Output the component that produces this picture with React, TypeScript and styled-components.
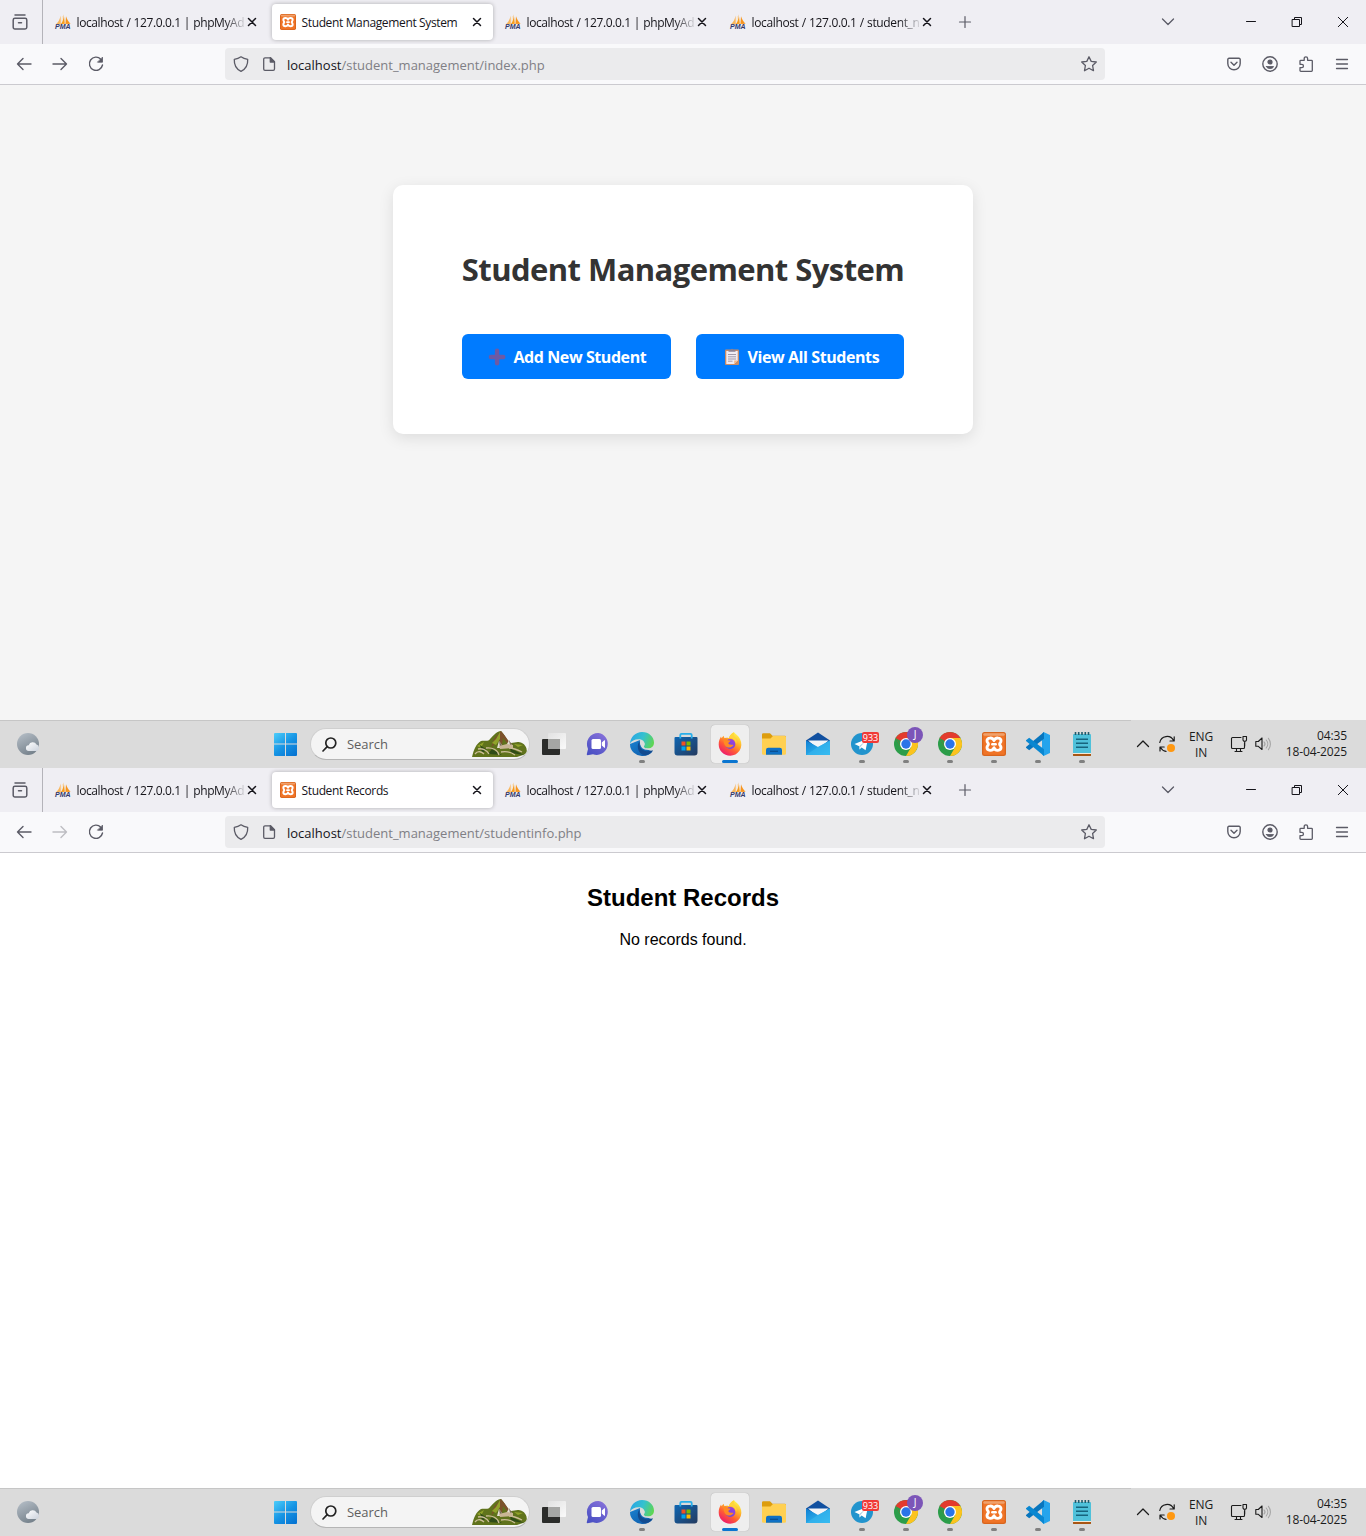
import React from "react";
import styled, { createGlobalStyle, css } from "styled-components";

const ui = `"Open Sans", "Noto Sans", sans-serif`;

const GlobalStyle = createGlobalStyle`
  * { box-sizing: border-box; }
  body { margin: 0; background: #fff; font-family: ${ui}; }
  svg { display: block; flex: none; overflow: visible; }
`;

/* ---------- layout ---------- */

const Screen = styled.section`
  display: flex;
  flex-direction: column;
  width: 1366px;
  height: 768px;
  overflow: hidden;
`;

const TabStrip = styled.div`
  display: flex;
  align-items: center;
  height: 44px;
  flex: none;
  background: #efeef3;
  color: #15141a;
`;

const ViewButton = styled.div`
  display: flex;
  align-items: center;
  justify-content: center;
  width: 43px;
  height: 44px;
  padding-right: 2px;
  border-right: 1px solid #b4b3b9;
  margin-right: 4px;
`;

const TabBox = styled.div<{ $active?: boolean }>`
  display: flex;
  align-items: center;
  width: 221px;
  height: 36px;
  margin-right: 4px;
  padding: 0 8px;
  border-radius: 4px;
  ${(p) =>
    p.$active &&
    css`
      background: #fff;
      box-shadow: 0 0 4px rgba(0, 0, 0, 0.28);
    `}
`;

const TabTitle = styled.span<{ $fade?: boolean; $spacing: number }>`
  width: 168px;
  margin-left: 5px;
  padding: 2px 0 0 0.5px;
  white-space: nowrap;
  font-size: 12px;
  line-height: 18px;
  letter-spacing: ${(p) => p.$spacing}px;
  ${(p) =>
    p.$fade &&
    css`
      word-spacing: 0.5px;
      mask-image: linear-gradient(to right, #000 148px, rgba(0, 0, 0, 0.15) 168px);
    `}
`;

const IconCell = styled.div<{ $w: number }>`
  display: flex;
  align-items: center;
  justify-content: center;
  width: ${(p) => p.$w}px;
  flex: none;
`;

const Spacer = styled.div`
  flex: 1;
`;

const WindowControls = styled.div`
  display: flex;
`;

const Toolbar = styled.div`
  display: flex;
  align-items: center;
  height: 41px;
  flex: none;
  padding: 0 6px;
  background: #f9f9fb;
  border-bottom: 1px solid #cbcacf;
  color: #5b5b66;
`;

const NavGroup = styled.div`
  display: flex;
  width: 219px;
`;

const AddressBar = styled.div`
  display: flex;
  align-items: center;
  width: 880px;
  height: 32px;
  border-radius: 4px;
  background: #ebebed;
`;

const Url = styled.span`
  flex: 1;
  margin-left: 6px;
  padding-top: 1px;
  font-size: 13px;
  line-height: 20px;
  white-space: nowrap;
  color: #7f7f85;
  b {
    font-weight: 400;
    color: #15141a;
  }
`;

const ToolGroup = styled.div`
  display: flex;
  margin-left: 111px;
`;

/* ---------- pages ---------- */

const HomePage = styled.main`
  display: flex;
  flex: 1;
  justify-content: center;
  align-items: flex-start;
  padding-top: 100px;
  background: #f5f5f5;
`;

const Card = styled.div`
  display: flex;
  flex-direction: column;
  align-items: center;
  width: 580px;
  height: 249px;
  padding-top: 63px;
  border-radius: 10px;
  background: #fff;
  box-shadow: 0 4px 15px rgba(0, 0, 0, 0.1);
`;

const CardTitle = styled.h1`
  margin: 0 0 43px;
  font-size: 31px;
  line-height: 43px;
  font-weight: 700;
  letter-spacing: -0.57px;
  white-space: nowrap;
  color: #333;
`;

const ButtonRow = styled.div`
  display: flex;
  gap: 25px;
`;

const LinkButton = styled.a<{ $w: number }>`
  display: flex;
  align-items: center;
  width: ${(p) => p.$w}px;
  height: 45px;
  padding: 1px 0 0 26px;
  border-radius: 6px;
  background: #007bff;
  color: #fff;
  font-size: 16px;
  font-weight: 700;
  line-height: 22px;
  letter-spacing: -0.42px;
  white-space: nowrap;
  span {
    margin-left: 6.500px;
  }
`;

const RecordsPage = styled.main`
  flex: 1;
  padding-top: 31px;
  background: #fff;
  color: #000;
  text-align: center;
  font-family: "Liberation Sans", Arial, sans-serif;
  h2 {
    margin: 0 0 19px;
    font-size: 24px;
    line-height: 28px;
  }
  p {
    margin: 0;
    font-size: 16px;
    line-height: 18px;
  }
`;

/* ---------- taskbar ---------- */

const TaskbarRow = styled.footer`
  display: flex;
  align-items: center;
  height: 48px;
  flex: none;
  background: linear-gradient(#c6c6c6, #c6c6c6) 0 0 / 1131px 1px no-repeat #dbdbdb;
`;

const Widgets = styled.div`
  width: 264px;
  padding-left: 16px;
`;

const SearchBox = styled.div`
  display: flex;
  align-items: center;
  width: 220px;
  height: 32px;
  margin: 0 2px 0 2px;
  padding-left: 11px;
  border: 1px solid #cfcfcf;
  border-bottom-color: #b5b5b5;
  border-radius: 16px;
  background: #f4f4f4;
  overflow: hidden;
  span {
    flex: 1;
    margin-left: 10px;
    font-size: 13px;
    color: #5f5f5f;
    letter-spacing: -0.05px;
  }
`;

const AppCell = styled.div`
  display: flex;
  justify-content: center;
  width: 44px;
`;

const AppTile = styled.div<{ $state?: "open" | "focus" }>`
  position: relative;
  display: flex;
  align-items: center;
  justify-content: center;
  width: 38px;
  height: 38px;
  border-radius: 4px;
  ${(p) =>
    p.$state === "focus" &&
    css`
      background: #eeeeee;
      box-shadow: 0 0 1px rgba(0, 0, 0, 0.3);
    `}
  &::after {
    content: "";
    display: ${(p) => (p.$state ? "block" : "none")};
    position: absolute;
    bottom: 0;
    left: 50%;
    transform: translateX(-50%);
    width: ${(p) => (p.$state === "focus" ? 16 : 6)}px;
    height: 3px;
    border-radius: 2px;
    background: ${(p) => (p.$state === "focus" ? "#0a75d0" : "#808080")};
  }
`;

const CountBadge = styled.span`
  position: absolute;
  left: 19px;
  top: 7px;
  width: 17px;
  height: 11px;
  border-radius: 2px;
  background: #f03a37;
  color: #fff;
  font: 9px/11px ${ui};
  text-align: center;
`;

const ProfileBadge = styled.span`
  position: absolute;
  left: 20px;
  top: 2px;
  width: 16px;
  height: 16px;
  border-radius: 50%;
  background: #7c55b8;
  color: #fff;
  font: 10px/15px "Noto Sans", sans-serif;
  text-align: center;
`;

const Tray = styled.div`
  display: flex;
  align-items: center;
  flex: 1;
  padding-left: 27px;
  padding-right: 19px;
  color: #1b1b1b;
`;

const TrayText = styled.div<{ $w: number; $align: "center" | "right"; $spacing: number; $top?: number }>`
  width: ${(p) => p.$w}px;
  padding-top: ${(p) => p.$top ?? 0}px;
  font-size: 12px;
  line-height: 16px;
  letter-spacing: ${(p) => p.$spacing}px;
  text-align: ${(p) => p.$align};
  white-space: nowrap;
`;

/* ---------- icons ---------- */

const Line = ({
  w = 16,
  d,
  sw = 1.3,
  color = "currentColor",
  children,
}: {
  w?: number;
  d?: string;
  sw?: number;
  color?: string;
  children?: React.ReactNode;
}) => (
  <svg width={w} height={w} viewBox={`0 0 ${w} ${w}`} fill="none" stroke={color} strokeWidth={sw} strokeLinecap="round" strokeLinejoin="round">
    {d && <path d={d} />}
    {children}
  </svg>
);

const PmaIcon = () => (
  <svg width="16" height="16" viewBox="0 0 16 16">
    <path d="M5.6 1.5 5.8 10 .8 10.6C3.500 8 5 5 5.600 1.500Z" fill="#f9b65c" />
    <path d="M8.800 .2 9.800 9.800 5.800 10.300C8 7 8.800 4 8.800 .2Z" fill="#f89c1c" />
    <path d="M11 2.300C12 5.500 13.600 8 15.600 9.800L10.400 10Z" fill="#f7941d" />
    <path d="M7.500 2 6.700 7.500" stroke="#fde0b5" strokeWidth=".7" />
    <text x="0" y="15" fontFamily="Liberation Sans" fontSize="6.400" fontWeight="700" fontStyle="italic" fill="#34386b" textLength="15.600" lengthAdjust="spacingAndGlyphs">
      PMA
    </text>
  </svg>
);

const XamppIcon = ({ size }: { size: number }) => (
  <svg width={size} height={size} viewBox="0 0 24 24">
    <rect width="24" height="24" rx="2.500" fill="#d9651d" />
    <rect x="1.300" y="1.300" width="21.400" height="21.400" rx="1.500" fill="#f07427" />
    <rect x="1.300" y="1.300" width="21.400" height="2.500" rx="1.200" fill="#f0a16c" />
    <path
      d="M12 8.600C13.200 5 19 5.400 19 8.800C19 10.800 17.600 11 17.600 12.200C17.600 13.400 19 13.600 19 15.600C19 19 13.200 19.400 12 15.800C10.800 19.400 5 19 5 15.600C5 13.600 6.400 13.400 6.400 12.200C6.400 11 5 10.800 5 8.800C5 5.400 10.800 5 12 8.600Z"
      fill="none"
      stroke="#fff"
      strokeWidth="2.900"
      strokeLinejoin="round"
    />
    <path d="M10.300 12.200H13.700" stroke="#fff" strokeWidth="2.400" strokeLinecap="round" />
  </svg>
);

const ChromeIcon = () => (
  <svg width="24" height="24" viewBox="0 0 24 24">
    <circle cx="12" cy="12" r="12" fill="#2b9d49" />
    <path d="M1.600 6A12 12 0 0 1 22.400 6L12 6.600 6.800 15Z" fill="#e33b2e" />
    <path d="M22.400 6A12 12 0 0 1 12 24L17.200 15 12 6Z" fill="#fcc31e" />
    <path d="M1.600 6 6.800 15 12 12Z" fill="#2b9d49" />
    <circle cx="12" cy="12" r="6" fill="#fff" />
    <circle cx="12" cy="12" r="4.700" fill="#2a74e8" />
  </svg>
);

const WeatherIcon = () => (
  <svg width="24" height="24" viewBox="0 0 24 24">
    <defs>
      <linearGradient id="moon" x1=".2" y1="0" x2=".7" y2="1">
        <stop offset="0" stopColor="#b3bcc5" />
        <stop offset="1" stopColor="#737f89" />
      </linearGradient>
      <linearGradient id="cloud" x1="0" y1="0" x2="1" y2="1">
        <stop offset="0" stopColor="#fff" />
        <stop offset="1" stopColor="#cbd2dc" />
      </linearGradient>
    </defs>
    <circle cx="12" cy="12" r="11" fill="url(#moon)" />
    <path d="M13 19a2.900 2.900 0 0 1-.3-5.800 4.200 4.200 0 0 1 7.800-.6A3.300 3.300 0 0 1 20.600 19Z" fill="url(#cloud)" />
  </svg>
);

const WindowsIcon = () => (
  <svg width="24" height="24" viewBox="0 0 24 24">
    <defs>
      <linearGradient id="win" gradientUnits="userSpaceOnUse" x1="0" y1="0" x2="20" y2="24">
        <stop offset="0" stopColor="#4fd0fb" />
        <stop offset=".55" stopColor="#1694e4" />
        <stop offset="1" stopColor="#0674d2" />
      </linearGradient>
    </defs>
    <path d="M1 1H11V11.500H0V2a1 1 0 0 1 1-1ZM12 1H22a1 1 0 0 1 1 1V11.500H12ZM0 12.500H11V24H1a1 1 0 0 1-1-1ZM12 12.500H23V23a1 1 0 0 1-1 1H12Z" fill="url(#win)" />
  </svg>
);

const HillsIcon = () => (
  <svg width="57" height="28" viewBox="0 0 57 28">
    <path d="M0 27C2 19 4 14 9 11 13 10 16 12 18 9 22 5 25 1 29 1 33 5 35 11 39 13 43 13 45 11 50 13 54 15 56 20 54 24L45 27H0Z" fill="#60731c" />
    <path d="M29 1C34 6 36 12 40 14L35 13 31 8 30 15 26 9 19 18 22 9Z" fill="#7c512b" />
    <path d="M28 2 24 9 20 13 24 15 28 9ZM42 14 51 15 46 17ZM5 16 12 12 9 18Z" fill="#91a32a" />
    <path d="M8 15 15 20 10 23M38 18 52 25 39 23ZM20 19 30 25 16 24Z" fill="#304c17" />
    <path d="M3 24C6 20 10 22 12 24M14 18C20 17 26 20 27 25M37 18C42 18 46 20 50 22M29 22C35 21 39 22 43 25M6 19C10 18 15 20 17 24" fill="none" stroke="#cbbd97" strokeWidth="1.300" />
    <path d="M25 18 27 11 30 15 31 18ZM34 16 37 10 40 15 39 17Z" fill="#e8e2d7" />
    <path d="M27 11 30 15 31 18 28 17ZM37 10 40 15 38 15Z" fill="#796b59" />
    <path d="M27 16 35 14 41 15 41 18 28 19Z" fill="#c9b695" />
  </svg>
);

const TaskViewIcon = () => (
  <svg width="24" height="24" viewBox="0 0 24 24">
    <defs>
      <linearGradient id="tv" x1="0" y1="0" x2="1" y2="1">
        <stop offset="0" stopColor="#e2e2e2" />
        <stop offset="1" stopColor="#fafafa" />
      </linearGradient>
    </defs>
    <rect x="0" y="7" width="18" height="16" rx="1" fill="#2b2c2a" />
    <rect x="6" y="1" width="18" height="16" rx="1" fill="url(#tv)" />
    <rect x="6" y="7" width="12" height="10" fill="#a5a6a4" />
  </svg>
);

const ChatIcon = () => (
  <svg width="24" height="24" viewBox="0 0 24 24">
    <defs>
      <linearGradient id="chat" x1="1" y1="0" x2=".3" y2="1">
        <stop offset="0" stopColor="#8d74dc" />
        <stop offset="1" stopColor="#4b51c4" />
      </linearGradient>
    </defs>
    <path d="M12.500 1A11 11 0 1 1 7 22.200L1.500 23.300A1 1 0 0 1 .8 22L2 17A11.200 11.200 0 0 1 12.500 1Z" fill="url(#chat)" />
    <rect x="5.500" y="7" width="9.500" height="10" rx="1.500" fill="#fff" />
    <path d="M15.800 10.500 18.300 8.300a.4.400 0 0 1 .7.300v6.800a.4.400 0 0 1-.7.300L15.800 13.500Z" fill="#fff" />
  </svg>
);

const EdgeIcon = () => (
  <svg width="24" height="24" viewBox="0 0 24 24">
    <defs>
      <linearGradient id="edge-top" x1="0" y1=".3" x2="1" y2=".6">
        <stop offset="0" stopColor="#2aa6e4" />
        <stop offset=".5" stopColor="#35c1cf" />
        <stop offset="1" stopColor="#5fd650" />
      </linearGradient>
      <linearGradient id="edge-low" x1="0" y1="0" x2="1" y2="1">
        <stop offset="0" stopColor="#1a82d0" />
        <stop offset="1" stopColor="#0d57a6" />
      </linearGradient>
    </defs>
    <path d="M0 12A12 12 0 0 0 13 24C17 24 20.500 22 22.600 19.500 20 18 8 16 10 8Z" fill="url(#edge-low)" />
    <path d="M0 11.500C.5 5 5.600 0 12 0 19 0 24 5 24 10.500 24 14.500 21 16.600 17.800 16.600 15 16.600 13.500 15.500 13.800 14.600 14.200 13.900 14.600 13.200 14.600 12 14.600 9.200 12 7.200 8.600 7.200 4.500 7.200 1.500 9 0 11.500Z" fill="url(#edge-top)" />
    <path d="M10.200 8.800C6 12 7 22 15 23.300 18 23 21 21.500 22.700 18.800 22.800 18.300 22.400 18.200 22 18.500 17.500 20.500 11 18.500 9.800 14 9.300 12 9.500 10 10.200 8.800Z" fill="#124b8f" />
    <path d="M10.300 12C10.600 10.500 11.500 9.800 12.500 9.700 14 10.300 14.600 11 14.600 12 14.600 13.300 13.800 13.900 13.800 14.700 13.800 15.600 15 16.600 17.800 16.600 20 16.600 21.500 15.900 22.500 14.900 20.500 19 11.500 19.500 10.300 12Z" fill="#dbdbdb" />
  </svg>
);

const StoreIcon = () => (
  <svg width="24" height="24" viewBox="0 0 24 24">
    <defs>
      <linearGradient id="store" x1="0" y1="0" x2="1" y2="1">
        <stop offset="0" stopColor="#0e66b3" />
        <stop offset="1" stopColor="#243a5e" />
      </linearGradient>
    </defs>
    <path d="M.5 6a1 1 0 0 1 1-1h21a1 1 0 0 1 1 1v14.500a3 3 0 0 1-3 3h-17a3 3 0 0 1-3-3Z" fill="url(#store)" />
    <path d="M6.300 6.500V3a1.200 1.200 0 0 1 1.200-1.200h9A1.200 1.200 0 0 1 17.700 3v3.500" fill="none" stroke="#28afea" strokeWidth="1.800" />
    <path d="M7.500 9.500h4v4h-4Z" fill="#f25022" />
    <path d="M12.500 9.500h4v4h-4Z" fill="#7fba00" />
    <path d="M7.500 14.500h4v4h-4Z" fill="#00a4ef" />
    <path d="M12.500 14.500h4v4h-4Z" fill="#ffb900" />
  </svg>
);

const FirefoxIcon = () => (
  <svg width="24" height="24" viewBox="0 0 24 24">
    <defs>
      <linearGradient id="fx" x1=".8" y1=".1" x2=".25" y2=".95">
        <stop offset="0" stopColor="#fff04a" />
        <stop offset=".35" stopColor="#ffab27" />
        <stop offset=".65" stopColor="#ff5a35" />
        <stop offset="1" stopColor="#ee1d6c" />
      </linearGradient>
      <linearGradient id="fx-globe" x1="0" y1="1" x2="1" y2="0">
        <stop offset="0" stopColor="#5a4be0" />
        <stop offset="1" stopColor="#a73edb" />
      </linearGradient>
    </defs>
    <path d="M16 .3C17.500 2 21 4.500 22 7 24 11 23.800 15 21.500 18.800 19.300 22 16 23.700 12.300 23.700 5.500 23.700.7 18.500.7 12.500.7 9.500 1.500 7 3 4.500L3.600 6.200 5.500 3.700 6.500 6.300C8.500 5.500 9.700 5.700 11 6.200 11.500 3.500 13.500 1.500 16 .3Z" fill="url(#fx)" />
    <circle cx="12.300" cy="12" r="5.100" fill="url(#fx-globe)" />
    <path d="M6.500 6.300C8 6.500 9 7.300 9.800 8.300L12.600 8.600C12.300 10 10.500 10.100 10.300 11.300 11.400 13.500 13.700 12.200 15.500 12.900 14.500 15.500 9 17 6.800 13.200 5.800 11 5 9 6.500 6.300Z" fill="#ff8a23" />
    <path d="M11 6.200C13.500 5.200 17.800 7.500 18 12 19.500 9.500 18 6.500 16 5 15.500 3 15.800 1.500 16 .3 13.500 1.500 11.500 3.500 11 6.200Z" fill="#ffd53a" />
  </svg>
);

const FolderIcon = () => (
  <svg width="24" height="24" viewBox="0 0 24 24">
    <path d="M0 2.500A1.300 1.300 0 0 1 1.300 1.200H8L10.500 3.700H22.700A1.300 1.300 0 0 1 24 5V9H0Z" fill="#dd9d0e" />
    <path d="M0 6.500H8.500L11 4H22.800A1.200 1.200 0 0 1 24 5.200V21.500A1.300 1.300 0 0 1 22.700 22.800H1.300A1.300 1.300 0 0 1 0 21.500Z" fill="#ffd052" />
    <path d="M4 22.800V18A2.200 2.200 0 0 1 6.200 15.800H17.800A2.200 2.200 0 0 1 20 18V22.800Z" fill="#0f70c4" />
    <path d="M8 19.300H16" stroke="#0a4f92" strokeWidth="1.300" />
  </svg>
);

const MailIcon = () => (
  <svg width="24" height="24" viewBox="0 0 24 24">
    <defs>
      <linearGradient id="mail" x1="0" y1="0" x2="1" y2="1">
        <stop offset="0" stopColor="#0f7fd4" />
        <stop offset="1" stopColor="#3cc8f5" />
      </linearGradient>
    </defs>
    <path d="M0 8.500 12 .5 24 8.500V14H0Z" fill="#1150a0" />
    <path d="M2 8.500H22.500L12.500 17Z" fill="#f3f5f8" />
    <path d="M0 8.500 12 15 24 8.500V23H0Z" fill="url(#mail)" />
    <path d="M0 23 12 15 24 8.500V23Z" fill="#36b5ee" opacity=".65" />
  </svg>
);

const TelegramIcon = () => (
  <svg width="24" height="24" viewBox="0 0 24 24">
    <circle cx="12" cy="12" r="11" fill="#2294cd" />
    <path d="M4.500 12 18 6.500 15.600 18.300 11.600 15.500 9.500 17.500 9.200 14.200Z" fill="#fff" />
    <path d="M9.200 14.200 15.300 9.200 10.500 14.800 9.500 17.500Z" fill="#a9cfe3" />
  </svg>
);

const CodeIcon = () => (
  <svg width="24" height="24" viewBox="0 0 24 24">
    <path d="M17.500 0 24 3V21L17.500 24 16 22V2Z" fill="#25a4ec" />
    <path d="M18 0 18 6.800 3.200 18.300 0 15.800V15Z" fill="#0875bd" />
    <path d="M18 24 18 17.200 3.200 5.700 0 8.200V9Z" fill="#0a87d1" />
  </svg>
);

const NotepadIcon = () => (
  <svg width="24" height="24" viewBox="0 0 24 24">
    <path d="M3 20H21V23.500A.8.800 0 0 1 20.200 24H3.800A.8.800 0 0 1 3 23.500Z" fill="#a85614" />
    <path d="M3 20H21V22H3Z" fill="#f3ead9" />
    <path d="M3 3A1 1 0 0 1 4 2H20A1 1 0 0 1 21 3V21H3Z" fill="#4fc1da" />
    <path d="M6 7.300H18M6 11.300H18M6 15.300H18" stroke="#16657e" strokeWidth="1.500" />
    <path d="M5.500 0V3M8.700 0V3M12 0V3M15.300 0V3M18.500 0V3" stroke="#215b6c" strokeWidth="1.600" />
  </svg>
);

const PlusEmoji = () => (
  <svg width="19" height="18" viewBox="0 0 19 18">
    <path d="M9.100 2.800V15.200M2.900 9H15.300" stroke="#6c5aa5" strokeWidth="4.400" strokeLinecap="round" />
  </svg>
);

const ClipboardEmoji = () => (
  <svg width="19" height="18" viewBox="0 0 19 18">
    <rect x="3" y="1.500" width="14" height="15.500" rx="1" fill="#c98c68" />
    <path d="M4.300 3H15.700V12.500L12.200 16H4.300Z" fill="#f0ebf3" />
    <path d="M12.200 16V12.500H15.700Z" fill="#f5b884" />
    <path d="M6.500 3.800V2.200H8.500A1.500 1.500 0 0 1 11.500 2.200H13.500V3.800Z" fill="#8b8295" />
    <path d="M6 6.500H14M6 8.800H14M6 11H14M6 13.200H10.500" stroke="#a19aac" strokeWidth="1" />
  </svg>
);

/* ---------- browser chrome ---------- */

type TabInfo = { title: string; kind: "pma" | "xampp"; spacing: number };

const Tab = ({ title, kind, spacing }: TabInfo) => (
  <TabBox $active={kind === "xampp"}>
    {kind === "pma" ? <PmaIcon /> : <XamppIcon size={16} />}
    <TabTitle $fade={kind === "pma"} $spacing={spacing}>
      {title}
    </TabTitle>
    <IconCell $w={16}>
      <Line w={8} d="M.5.5 7.500 7.500M7.500.5.5 7.500" sw={1.500} />
    </IconCell>
  </TabBox>
);

const Browser = ({ title, path, forward }: { title: string; path: string; forward: boolean }) => (
  <>
    <TabStrip>
      <ViewButton>
        <Line color="#5b5b66" sw={1.500} d="M3 .9H13M2.900 4.300H13.100A1.700 1.700 0 0 1 14.800 6V13.300A1.700 1.700 0 0 1 13.100 15H2.900A1.700 1.700 0 0 1 1.200 13.300V6A1.700 1.700 0 0 1 2.900 4.300ZM6.500 8.700H9.500" />
      </ViewButton>
      <Tab title="localhost / 127.0.0.1 | phpMyAd" kind="pma" spacing={-0.4} />
      <Tab title={title} kind="xampp" spacing={-0.36} />
      <Tab title="localhost / 127.0.0.1 | phpMyAd" kind="pma" spacing={-0.4} />
      <Tab title="localhost / 127.0.0.1 / student_n" kind="pma" spacing={-0.36} />
      <IconCell $w={35}>
        <Line w={12} color="#5b5b66" d="M6 .5V11.500M.5 6H11.500" sw={1.200} />
      </IconCell>
      <Spacer />
      <IconCell $w={36}>
        <Line w={12} color="#5b5b66" d="M.5 3 6 8.500 11.500 3" />
      </IconCell>
      <IconCell $w={42} />
      <WindowControls>
        <IconCell $w={46}>
          <Line w={10} d="M.5 4.500H9.500" sw={1} />
        </IconCell>
        <IconCell $w={46}>
          <Line w={10} sw={1}>
            <path d="M.5 2.500H7.500V9.500H.5ZM2.500 2.500V.5H9.500V7.500H7.500" />
          </Line>
        </IconCell>
        <IconCell $w={46}>
          <Line w={10} d="M.3.3 9.700 9.700M9.700.3.3 9.700" sw={1} />
        </IconCell>
      </WindowControls>
    </TabStrip>
    <Toolbar>
      <NavGroup>
        <IconCell $w={36}>
          <Line d="M15 8H1.500M7 2.500 1.500 8 7 13.500" sw={1.400} />
        </IconCell>
        <IconCell $w={36}>
          <Line color={forward ? "currentColor" : "#bdbdc2"} d="M1 8H14.500M9 2.500 14.500 8 9 13.500" sw={1.400} />
        </IconCell>
        <IconCell $w={36}>
          <Line sw={1.400}>
            <path d="M14.500 9A6.600 6.600 0 1 1 12.800 3.200" />
            <path d="M14.500 1.500V6.200H9.800Z" fill="currentColor" strokeWidth=".8" />
          </Line>
        </IconCell>
      </NavGroup>
      <AddressBar>
        <IconCell $w={32}>
          <Line d="M8 .8C10 2.200 12 2.900 14.700 3.300 15 8.500 13 13 8 15.400 3 13 1 8.500 1.300 3.300 4 2.900 6 2.200 8 .8Z" />
        </IconCell>
        <IconCell $w={24}>
          <Line w={14}>
            <path d="M3 .8H8.500L12.500 4.800V12A1.300 1.300 0 0 1 11.200 13.300H3A1.300 1.300 0 0 1 1.700 12V2.100A1.300 1.300 0 0 1 3 .8Z" />
            <path d="M8.300 .8V5.100H12.500Z" fill="currentColor" />
          </Line>
        </IconCell>
        <Url>
          <b>localhost</b>
          {path}
        </Url>
        <IconCell $w={32}>
          <Line d="M8 .8 10.200 5.400 15.300 6 11.600 9.500 12.500 14.700 8 12.200 3.500 14.700 4.400 9.500.7 6 5.800 5.400Z" />
        </IconCell>
      </AddressBar>
      <ToolGroup>
        <IconCell $w={36}>
          <Line w={14} d="M2 1.300H12A1.200 1.200 0 0 1 13.200 2.500V6.500A6.200 6.200 0 0 1 .8 6.500V2.500A1.200 1.200 0 0 1 2 1.300ZM4 5.200 7 8.200 10 5.200" sw={1.400} />
        </IconCell>
        <IconCell $w={36}>
          <Line sw={1.400}>
            <circle cx="8" cy="8" r="7.200" />
            <circle cx="8" cy="6" r="1.900" fill="currentColor" />
            <path d="M4.500 10.500H11.500C11.200 12 9.800 12.500 8 12.500 6.200 12.500 4.800 12 4.500 10.500Z" fill="currentColor" strokeWidth=".8" />
          </Line>
        </IconCell>
        <IconCell $w={36}>
          <Line d="M2.800 4.300H6.200V2.500A1.700 1.700 0 0 1 9.600 2.500V4.300H13.500A.8.800 0 0 1 14.300 5.100V14.500A.8.800 0 0 1 13.500 15.300H2.800A.8.800 0 0 1 2 14.500V11.600H3.800A1.600 1.600 0 0 0 3.800 8.300H2V5.100A.8.800 0 0 1 2.800 4.300Z" />
        </IconCell>
        <IconCell $w={36}>
          <Line w={12} d="M.5 1.500H11.500M.5 6H11.500M.5 10.500H11.500" />
        </IconCell>
      </ToolGroup>
    </Toolbar>
  </>
);

/* ---------- taskbar ---------- */

type AppInfo = { icon: React.ReactNode; state?: "open" | "focus"; badge?: React.ReactNode };

const apps: AppInfo[] = [
  { icon: <TaskViewIcon /> },
  { icon: <ChatIcon /> },
  { icon: <EdgeIcon />, state: "open" },
  { icon: <StoreIcon /> },
  { icon: <FirefoxIcon />, state: "focus" },
  { icon: <FolderIcon /> },
  { icon: <MailIcon /> },
  { icon: <TelegramIcon />, state: "open", badge: <CountBadge>933</CountBadge> },
  { icon: <ChromeIcon />, state: "open", badge: <ProfileBadge>J</ProfileBadge> },
  { icon: <ChromeIcon />, state: "open" },
  { icon: <XamppIcon size={24} />, state: "open" },
  { icon: <CodeIcon />, state: "open" },
  { icon: <NotepadIcon />, state: "open" },
];

const Taskbar = () => (
  <TaskbarRow>
    <Widgets>
      <WeatherIcon />
    </Widgets>
    <AppCell>
      <WindowsIcon />
    </AppCell>
    <SearchBox>
      <Line w={15} color="#222" sw={1.700}>
        <circle cx="8.800" cy="6" r="5" />
        <path d="M5.200 9.700 1 14" />
      </Line>
      <span>Search</span>
      <HillsIcon />
    </SearchBox>
    {apps.map((app, i) => (
      <AppCell key={i}>
        <AppTile $state={app.state}>
          {app.icon}
          {app.badge}
        </AppTile>
      </AppCell>
    ))}
    <Tray>
      <IconCell $w={24}>
        <Line w={12} d="M.5 8.500 6 3 11.500 8.500" />
      </IconCell>
      <IconCell $w={24}>
        <Line w={16} sw={1.200}>
          <path d="M.8 6.500A7.300 7.300 0 0 1 14.500 4.500M15.200 .8V5H11M7 15.300A7.300 7.300 0 0 1 1.500 11.500M1 15V11H5.200" />
          <circle cx="12" cy="12" r="4" fill="#ff9811" stroke="none" />
        </Line>
      </IconCell>
      <TrayText $w={44} $align="center" $spacing={-0.1} $top={2}>
        ENG
        <br />
        IN
      </TrayText>
      <IconCell $w={32}>
        <Line w={16} sw={1.100}>
          <path d="M10 1.500H1.500A1 1 0 0 0 .5 2.500V11.500A1 1 0 0 0 1.500 12.500H12.500A1 1 0 0 0 13.500 11.500V7M4 15.500H11M5.500 12.500V15.500M9.500 12.500V15.500M12 .5H15.500V4A1.800 1.800 0 0 1 12 4ZM13.700 6V10" />
        </Line>
      </IconCell>
      <IconCell $w={16}>
        <Line w={16} sw={1.100}>
          <path d="M.8 5.500H3.300L7 2V13.500L3.300 10.300H.8Z" />
          <path d="M9 5.800A3 3 0 0 1 9 10M11.200 4A6 6 0 0 1 11.200 12M13.400 2.300A9 9 0 0 1 13.400 13.700" stroke="#a5a5a5" />
        </Line>
      </IconCell>
      <Spacer />
      <TrayText $w={70} $align="right" $spacing={-0.14}>
        04:35
        <br />
        18-04-2025
      </TrayText>
    </Tray>
  </TaskbarRow>
);

export default function App() {
  return (
    <>
      <GlobalStyle />
      <Screen>
        <Browser title="Student Management System" path="/student_management/index.php" forward />
        <HomePage>
          <Card>
            <CardTitle>Student Management System</CardTitle>
            <ButtonRow>
              <LinkButton $w={209}>
                <PlusEmoji />
                <span>Add New Student</span>
              </LinkButton>
              <LinkButton $w={208}>
                <ClipboardEmoji />
                <span>View All Students</span>
              </LinkButton>
            </ButtonRow>
          </Card>
        </HomePage>
        <Taskbar />
      </Screen>
      <Screen>
        <Browser title="Student Records" path="/student_management/studentinfo.php" forward={false} />
        <RecordsPage>
          <h2>Student Records</h2>
          <p>No records found.</p>
        </RecordsPage>
        <Taskbar />
      </Screen>
    </>
  );
}
